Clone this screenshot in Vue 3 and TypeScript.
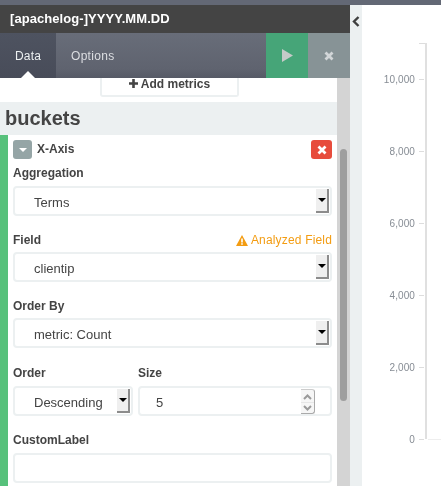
<script setup lang="ts">
const ticks = ['10,000', '8,000', '6,000', '4,000', '2,000', '0']
</script>

<template>
  <div class="page">
    <div class="strip"></div>
    <div class="columns">
      <aside class="sidebar">
        <div class="title">[apachelog-]YYYY.MM.DD</div>
        <nav class="tabs">
          <div class="tab active">Data</div>
          <div class="tab">Options</div>
          <div class="spacer"></div>
          <div class="action run">
            <svg width="11" height="13" viewBox="0 0 11 13"><path d="M0 0 L11 6.5 L0 13 Z" fill="#c6cac8" /></svg>
          </div>
          <div class="action cancel">
            <svg width="10" height="10" viewBox="0 0 10 10"><path d="M1.5 1.5 L8.5 8.5 M8.5 1.5 L1.5 8.5" stroke="#d2d6d8" stroke-width="2.8" /></svg>
          </div>
        </nav>
        <div class="body">
          <div class="scrollarea">
            <div class="addrow">
              <div class="addbtn">
                <svg class="plus" width="9" height="9" viewBox="0 0 9 9"><path d="M3.2 0 h2.6 v3.2 h3.2 v2.6 h-3.2 v3.2 h-2.6 v-3.2 h-3.2 v-2.6 h3.2 z" fill="#444" /></svg>
                Add metrics
              </div>
            </div>
            <h2 class="heading">buckets</h2>
            <section class="bucket">
              <div class="buckethead">
                <span class="toggle"><i class="caret"></i></span>
                <span class="axis">X-Axis</span>
                <span class="remove">
                  <svg width="10" height="10" viewBox="0 0 10 10"><path d="M1.5 1.5 L8.5 8.5 M8.5 1.5 L1.5 8.5" stroke="#fff" stroke-width="2.8" /></svg>
                </span>
              </div>

              <label class="lab">Aggregation</label>
              <div class="select">
                <span>Terms</span>
                <span class="arrow"><i></i></span>
              </div>

              <div class="labrow">
                <label class="lab">Field</label>
                <span class="warn">
                  <svg width="12" height="11" viewBox="0 0 12 11"><path d="M6 0 L12 11 L0 11 Z" fill="#f39c12" /><path d="M5.2 3.5 h1.6 v4 h-1.6z M5.2 8.3 h1.6 v1.5 h-1.6z" fill="#fff" /></svg>
                  Analyzed Field
                </span>
              </div>
              <div class="select">
                <span>clientip</span>
                <span class="arrow"><i></i></span>
              </div>

              <label class="lab">Order By</label>
              <div class="select">
                <span>metric: Count</span>
                <span class="arrow"><i></i></span>
              </div>

              <div class="pair">
                <div class="col-order">
                  <label class="lab">Order</label>
                  <div class="select">
                    <span>Descending</span>
                    <span class="arrow"><i></i></span>
                  </div>
                </div>
                <div class="col-size">
                  <label class="lab">Size</label>
                  <div class="number">
                    <span>5</span>
                    <span class="spin">
                      <svg width="13" height="24" viewBox="0 0 13 24">
                        <path d="M3 9 L6.5 5.5 L10 9" fill="none" stroke="#9a9a9a" stroke-width="2" />
                        <path d="M0 12.5 H13" stroke="#e6e6e6" stroke-width="1" />
                        <path d="M3 16 L6.5 19.5 L10 16" fill="none" stroke="#9a9a9a" stroke-width="2" />
                      </svg>
                    </span>
                  </div>
                </div>
              </div>

              <label class="lab">CustomLabel</label>
              <div class="textbox"></div>
            </section>
          </div>
          <div class="scrollbar"><div class="thumb"></div></div>
        </div>
      </aside>

      <div class="collapser">
        <svg width="8" height="11" viewBox="0 0 8 11"><path d="M6.5 1 L2 5.5 L6.5 10" fill="none" stroke="#3f3f3f" stroke-width="2.4" /></svg>
      </div>

      <main class="chart">
        <div class="yaxis">
          <div v-for="t in ticks" :key="t" class="tick">
            <span>{{ t }}</span><i></i>
          </div>
        </div>
        <div class="baseline"></div>
      </main>
    </div>
  </div>
</template>

<style>
html, body { margin: 0; padding: 0; background: #fff; overflow: hidden; }
</style>

<style scoped>
.page {
  width: 441px;
  height: 486px;
  display: flex;
  flex-direction: column;
  overflow: hidden;
  font-family: "Liberation Sans", Arial, sans-serif;
  color: #444;
  will-change: transform;
}
.strip { height: 5px; background: #636875; flex: none; }
.columns { flex: 1; display: flex; min-height: 0; }
.sidebar {
  width: 350px;
  flex: none;
  display: flex;
  flex-direction: column;
}
.title {
  height: 28px;
  flex: none;
  background: #444;
  color: #fff;
  font-size: 13px;
  font-weight: 700;
  line-height: 28px;
  padding-left: 10px;
  letter-spacing: 0.07px;
}
.tabs {
  height: 45px;
  flex: none;
  display: flex;
  background: linear-gradient(#686d79, #5f636f 80%, #565a66);
  font-size: 12px;
  color: #dcdee2;
}
.tab { padding: 0 15px; line-height: 46px; letter-spacing: 0.3px; }
.tab.active {
  width: 56px;
  box-sizing: border-box;
  background: linear-gradient(#4e5360, #484c59);
  color: #ecf0f1;
  position: relative;
  letter-spacing: 0.2px;
}
.tab.active::after {
  content: "";
  position: absolute;
  left: 21px;
  bottom: 0;
  border: 7px solid transparent;
  border-top: 0;
  border-bottom-color: #fff;
}
.spacer { flex: 1; }
.action { width: 42px; display: flex; align-items: center; justify-content: center; }
.run { background: #46a578; }
.cancel { background: #879396; }
.body { flex: 1; display: flex; min-height: 0; }
.scrollarea { flex: 1; min-width: 0; overflow: hidden; }
.scrollbar { width: 13px; flex: none; background: #d4d4d4; padding-top: 71px; box-sizing: border-box; }
.thumb { width: 7px; height: 252px; margin-left: 3px; background: #9e9e9e; border-radius: 4px; }
.addrow { height: 20px; display: flex; padding-left: 100px; }
.addbtn {
  width: 135px;
  height: 17px;
  border: 2px solid #ecf0f1;
  border-top: 0;
  border-radius: 0 0 3px 3px;
  font-size: 12px;
  font-weight: 700;
  display: flex;
  justify-content: center;
  align-items: flex-start;
  gap: 3px;
  line-height: 12px;
}
.plus { margin-top: 1px; }
.heading {
  margin: 4px 0 0;
  height: 33px;
  background: #ecf0f1;
  font-size: 20px;
  font-weight: 700;
  line-height: 32px;
  padding-left: 5px;
}
.bucket {
  border-left: 8px solid #57c17b;
  padding: 5px 5px 0 5px;
  height: 400px;
  box-sizing: border-box;
}
.buckethead { display: flex; align-items: center; height: 19px; }
.toggle {
  width: 19px;
  height: 19px;
  background: #95a5a6;
  border-radius: 3px;
  display: flex;
  align-items: center;
  justify-content: center;
}
.caret {
  width: 0;
  height: 0;
  border: 4px solid transparent;
  border-top: 4px solid #fff;
  border-bottom: 0;
}
.axis { margin: -2px 0 0 5px; font-size: 12px; font-weight: 700; }
.remove {
  margin-left: auto;
  width: 21px;
  height: 19px;
  background: #e74c3c;
  border-radius: 3px;
  display: flex;
  align-items: center;
  justify-content: center;
}
.lab { display: block; font-size: 12px; font-weight: 700; line-height: 14px; }
.buckethead + .lab { margin-top: 7px; padding-bottom: 1px; }
.labrow { display: flex; justify-content: space-between; align-items: center; margin-top: 17px; }
.warn { color: #f39c12; font-size: 12px; display: flex; align-items: center; gap: 3px; line-height: 14px; letter-spacing: 0.17px; }
.select {
  height: 30px;
  box-sizing: border-box;
  border: 2px solid #ecf0f1;
  border-radius: 4px;
  margin-top: 5px;
  font-size: 13px;
  color: #444;
  display: flex;
  align-items: center;
  justify-content: space-between;
  padding: 0 1px 0 19px;
}
.select > span:first-child { padding-top: 2px; }
.select + .lab { margin-top: 17px; }
.arrow {
  width: 13px;
  height: 24px;
  background: #efefef;
  border-right: 2px solid #8c8c8c;
  border-bottom: 2px solid #8c8c8c;
  box-sizing: border-box;
  display: flex;
  align-items: center;
  justify-content: center;
}
.arrow i {
  border: 4px solid transparent;
  border-top: 4px solid #000;
  border-bottom: 0;
}
.pair { display: flex; gap: 5px; margin-top: 18px; }
.col-order { width: 120px; flex: none; }
.col-size { flex: 1; }
.col-order .select, .number { margin-top: 6px; }
.number {
  height: 30px;
  box-sizing: border-box;
  border: 2px solid #ecf0f1;
  border-radius: 4px;
  font-size: 13px;
  display: flex;
  align-items: center;
  justify-content: space-between;
  padding: 0 15px 0 16px;
}
.number > span:first-child { padding-top: 2px; }
.spin {
  width: 14px;
  height: 25px;
  box-sizing: border-box;
  background: #f6f6f6;
  border-right: 1px solid #aaa;
  border-bottom: 1px solid #aaa;
  border-top: 1px solid #ccc;
  border-radius: 0 3px 3px 0;
  display: flex;
}
.textbox {
  height: 30px;
  box-sizing: border-box;
  border: 2px solid #ecf0f1;
  border-radius: 4px;
  margin-top: 6px;
}
.pair + .lab { margin-top: 17px; }
.collapser {
  width: 12px;
  flex: none;
  background: #ecf0f1;
  padding-top: 11px;
  box-sizing: border-box;
  display: flex;
  justify-content: center;
  align-items: flex-start;
}
.chart { flex: 1; min-width: 0; position: relative; }
.yaxis {
  position: absolute;
  left: 0;
  top: 38px;
  width: 63px;
  height: 396px;
  border-right: 2px solid #e0e0e0;
}
.yaxis::before {
  content: "";
  position: absolute;
  right: 0;
  top: 0;
  width: 6px;
  height: 1px;
  background: #ddd;
}
.tick {
  height: 72px;
  display: flex;
  align-items: center;
  justify-content: flex-end;
  gap: 4px;
  font-size: 10px;
  letter-spacing: 0.1px;
  color: #868c94;
}
.tick i { width: 5px; height: 1px; background: #ddd; margin-right: 1px; }
.baseline {
  position: absolute;
  left: 66px;
  right: 0;
  top: 434px;
  height: 1px;
  background: #eee;
}
</style>
